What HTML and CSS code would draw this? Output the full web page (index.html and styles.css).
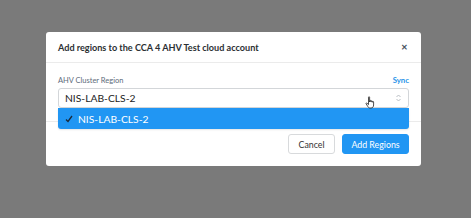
FILE: index.html
```html
<!DOCTYPE html>
<html>
<head>
<meta charset="utf-8">
<link rel="stylesheet" href="styles.css">
</head>
<body>
<div class="modal">
  <div class="modal-header">
    <div class="title">Add regions to the CCA 4 AHV Test cloud account</div>
    <div class="close">&#x2715;</div>
  </div>
  <div class="modal-body">
    <div class="label-row">
      <span class="label">AHV Cluster Region</span>
      <span class="sync">Sync</span>
    </div>
    <div class="select-wrap">
      <div class="select">
        <span>NIS-LAB-CLS-2</span>
        <svg class="arrows" width="5" height="8" viewBox="0 0 5 8"><path d="M0.5 3 L2.5 1 L4.5 3 M0.5 5 L2.5 7 L4.5 5" fill="none" stroke="#b0b6bc" stroke-width="0.9"/></svg>
      </div>
      <div class="dropdown">
        <svg class="check" width="8" height="8" viewBox="0 0 8 8"><path d="M1 4.5 L3 6.5 L7 1" fill="none" stroke="#1a2a3a" stroke-width="1.3"/></svg>
        <span>NIS-LAB-CLS-2</span>
      </div>
      <svg class="cursor" width="12" height="13" viewBox="0 0 12 13"><path d="M3.5 1.2 C3.5 0.6 4.6 0.6 4.6 1.2 L4.6 6 L4.9 4.8 C5 4.2 6 4.2 6 4.9 L6 6 L6.2 5.2 C6.4 4.6 7.3 4.7 7.3 5.4 L7.3 6.3 L7.5 5.8 C7.8 5.2 8.6 5.4 8.6 6 L8.6 9 C8.6 10.8 7.6 12 6 12 L5 12 C3.8 12 3.2 11.2 2.6 10.2 L1.1 7.8 C0.8 7.2 1.5 6.7 2 7.2 L3.5 8.6 Z" fill="#fff" stroke="#222" stroke-width="0.8"/></svg>
    </div>
  </div>
  <div class="modal-footer">
    <button class="btn btn-cancel">Cancel</button>
    <button class="btn btn-primary">Add Regions</button>
  </div>
</div>
</body>
</html>
```
FILE: styles.css
```css
html, body {
  margin: 0;
  padding: 0;
  background: #7a7a7a;
  font-family: Lato, "Open Sans", Arial, sans-serif;
}
body {
  width: 471px;
  height: 218px;
  overflow: hidden;
  padding-top: 32px;
  box-sizing: border-box;
}
.modal {
  margin-left: 46px;
  width: 375px;
  height: 134px;
  background: #fff;
  border-radius: 3px;
  display: flex;
  flex-direction: column;
}
.modal-header {
  height: 30px;
  border-bottom: 1px solid #ebebeb;
  display: flex;
  align-items: center;
  justify-content: space-between;
  padding: 0 12px;
}
.title {
  font-size: 9.1px;
  font-weight: 700;
  color: #2b2f33;
}
.close {
  font-size: 8px;
  font-weight: 700;
  color: #4a555f;
  padding-right: 1px;
}
.modal-body {
  padding: 11px 12px 13px 12px;
}
.label-row {
  display: flex;
  justify-content: space-between;
  align-items: center;
  height: 12px;
  margin-bottom: 2px;
}
.label {
  font-size: 7.5px;
  color: #5d6b7b;
}
.sync {
  font-size: 7.8px;
  font-weight: 700;
  color: #2a94e8;
}
.select-wrap {
  position: relative;
}
.select {
  height: 20px;
  box-sizing: border-box;
  border: 1px solid #d3d6d9;
  border-radius: 3px;
  display: flex;
  align-items: center;
  justify-content: space-between;
  padding: 0 6px 0 6px;
  font-size: 10.3px;
  color: #222;
}
.arrows {
  margin-right: 1px;
}
.dropdown {
  position: absolute;
  left: 0;
  right: 0;
  top: 20px;
  height: 21px;
  background: #2196f3;
  border-radius: 0 0 3px 3px;
  display: flex;
  align-items: center;
  padding-left: 7px;
  gap: 5px;
  font-size: 10.3px;
  color: #fff;
  box-shadow: 0 1px 2px rgba(0,0,0,0.1);
}
.cursor {
  position: absolute;
  left: 307px;
  top: 8px;
}
.modal-footer {
  border-top: 1px solid #ebebeb;
  padding: 12px 12px;
  display: flex;
  justify-content: flex-end;
  gap: 7px;
}
.btn {
  height: 20px;
  border-radius: 3px;
  font-family: Lato, "Open Sans", Arial, sans-serif;
  font-size: 8.8px;
  padding: 0;
  box-sizing: border-box;
}
.btn-cancel {
  width: 47px;
  background: #fff;
  border: 1px solid #d8dadc;
  color: #333;
}
.btn-primary {
  width: 67px;
  background: #2196f3;
  border: 1px solid #2196f3;
  color: #fff;
}
```
